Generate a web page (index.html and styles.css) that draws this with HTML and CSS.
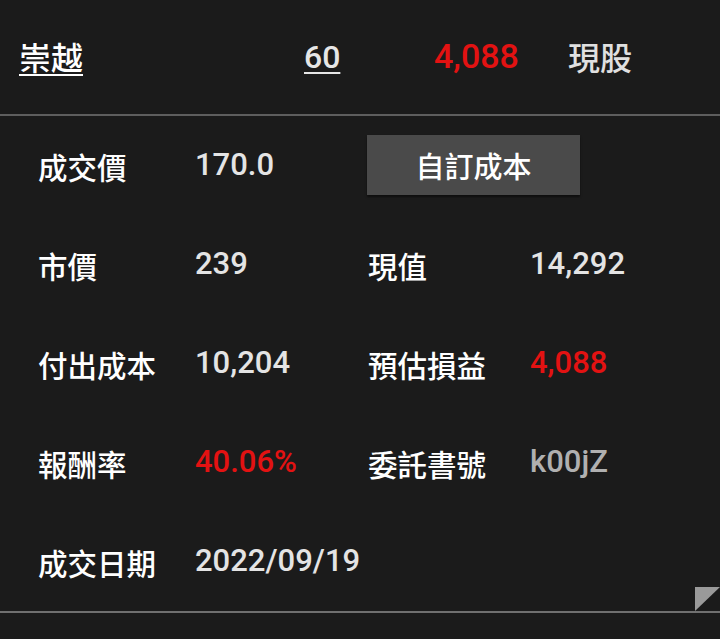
FILE: index.html
```html
<!DOCTYPE html>
<html lang="zh-Hant">
<head>
<meta charset="utf-8">
<link rel="stylesheet" href="styles.css">
</head>
<body>
<div class="panel">
  <div class="head">
    <span class="h-name">崇越</span>
    <span class="h-qty"><span class="u">60</span></span>
    <span class="h-pnl red">4,088</span>
    <span class="h-type">現股</span>
  </div>
  <div class="grid">
    <div class="lbl">成交價</div>
    <div class="val">170.0</div>
    <div class="btn-cell"><button class="btn">自訂成本</button></div>

    <div class="lbl">市價</div>
    <div class="val">239</div>
    <div class="lbl">現值</div>
    <div class="val">14,292</div>

    <div class="lbl">付出成本</div>
    <div class="val">10,204</div>
    <div class="lbl">預估損益</div>
    <div class="val red">4,088</div>

    <div class="lbl">報酬率</div>
    <div class="val red">40.06%</div>
    <div class="lbl">委託書號</div>
    <div class="val grey">k00jZ</div>

    <div class="lbl">成交日期</div>
    <div class="val">2022/09/19</div>
  </div>
  <div class="corner"></div>
</div>
</body>
</html>
```

FILE: styles.css
```css
html, body {
  margin: 0;
  padding: 0;
  background: #1b1b1b;
}
body {
  width: 720px;
  height: 639px;
  overflow: hidden;
  font-family: Roboto, "Noto Sans CJK TC", sans-serif;
}
.panel {
  position: relative;
  border-bottom: 2px solid #707070;
}
.head {
  display: flex;
  align-items: center;
  padding-left: 19px;
  border-bottom: 2px solid #5e5e5e;
  box-sizing: border-box;
  height: 116px;
  padding-bottom: 2px;
}
.head span {
  font-size: 32px;
  font-weight: 500;
  line-height: 40px;
}
.h-name {
  width: 285px;
  color: #ffffff;
  text-decoration: underline;
  text-underline-offset: 4px;
  text-decoration-thickness: 2px;
  font-family: "Noto Sans CJK TC", sans-serif;
}
.head .h-qty {
  width: 130px;
  color: #e6e6e6;
  font-family: Roboto, sans-serif;
  font-size: 34px;
}
.h-qty .u {
  text-decoration: underline;
  text-underline-offset: 4px;
  text-decoration-thickness: 2px;
}
.head .h-pnl {
  width: 134px;
  font-family: Roboto, sans-serif;
  font-size: 34px;
}
.h-type {
  color: #e0e0e0;
  font-family: "Noto Sans CJK TC", sans-serif;
}
.grid {
  display: grid;
  grid-template-columns: 157px 173px 162px 1fr;
  grid-auto-rows: 99px;
  padding-left: 38px;
  align-items: center;
}
.lbl {
  font-family: "Noto Sans CJK TC", sans-serif;
  font-size: 29.5px;
  font-weight: 500;
  color: #ffffff;
  line-height: 40px;
}
.val {
  font-family: Roboto, sans-serif;
  font-size: 31px;
  font-weight: 500;
  color: #e4e4e4;
  line-height: 40px;
  padding-bottom: 1px;
}
.red {
  color: #e31212;
}
.grey {
  color: #b0b0b0;
}
.btn-cell {
  grid-column: span 2;
  align-self: start;
  padding-top: 19px;
  margin-left: -1px;
}
.btn {
  display: block;
  width: 213px;
  height: 60px;
  background: #4a4a4a;
  border: none;
  border-radius: 0;
  color: #ffffff;
  font-family: "Noto Sans CJK TC", sans-serif;
  font-size: 29px;
  font-weight: 500;
  padding: 0;
  box-shadow: 0 2px 2px rgba(0,0,0,0.5);
}
.corner {
  position: absolute;
  right: 0;
  bottom: 0;
  width: 0;
  height: 0;
  border-top: 24px solid #9a9a9a;
  border-right: 25px solid transparent;
}
```
